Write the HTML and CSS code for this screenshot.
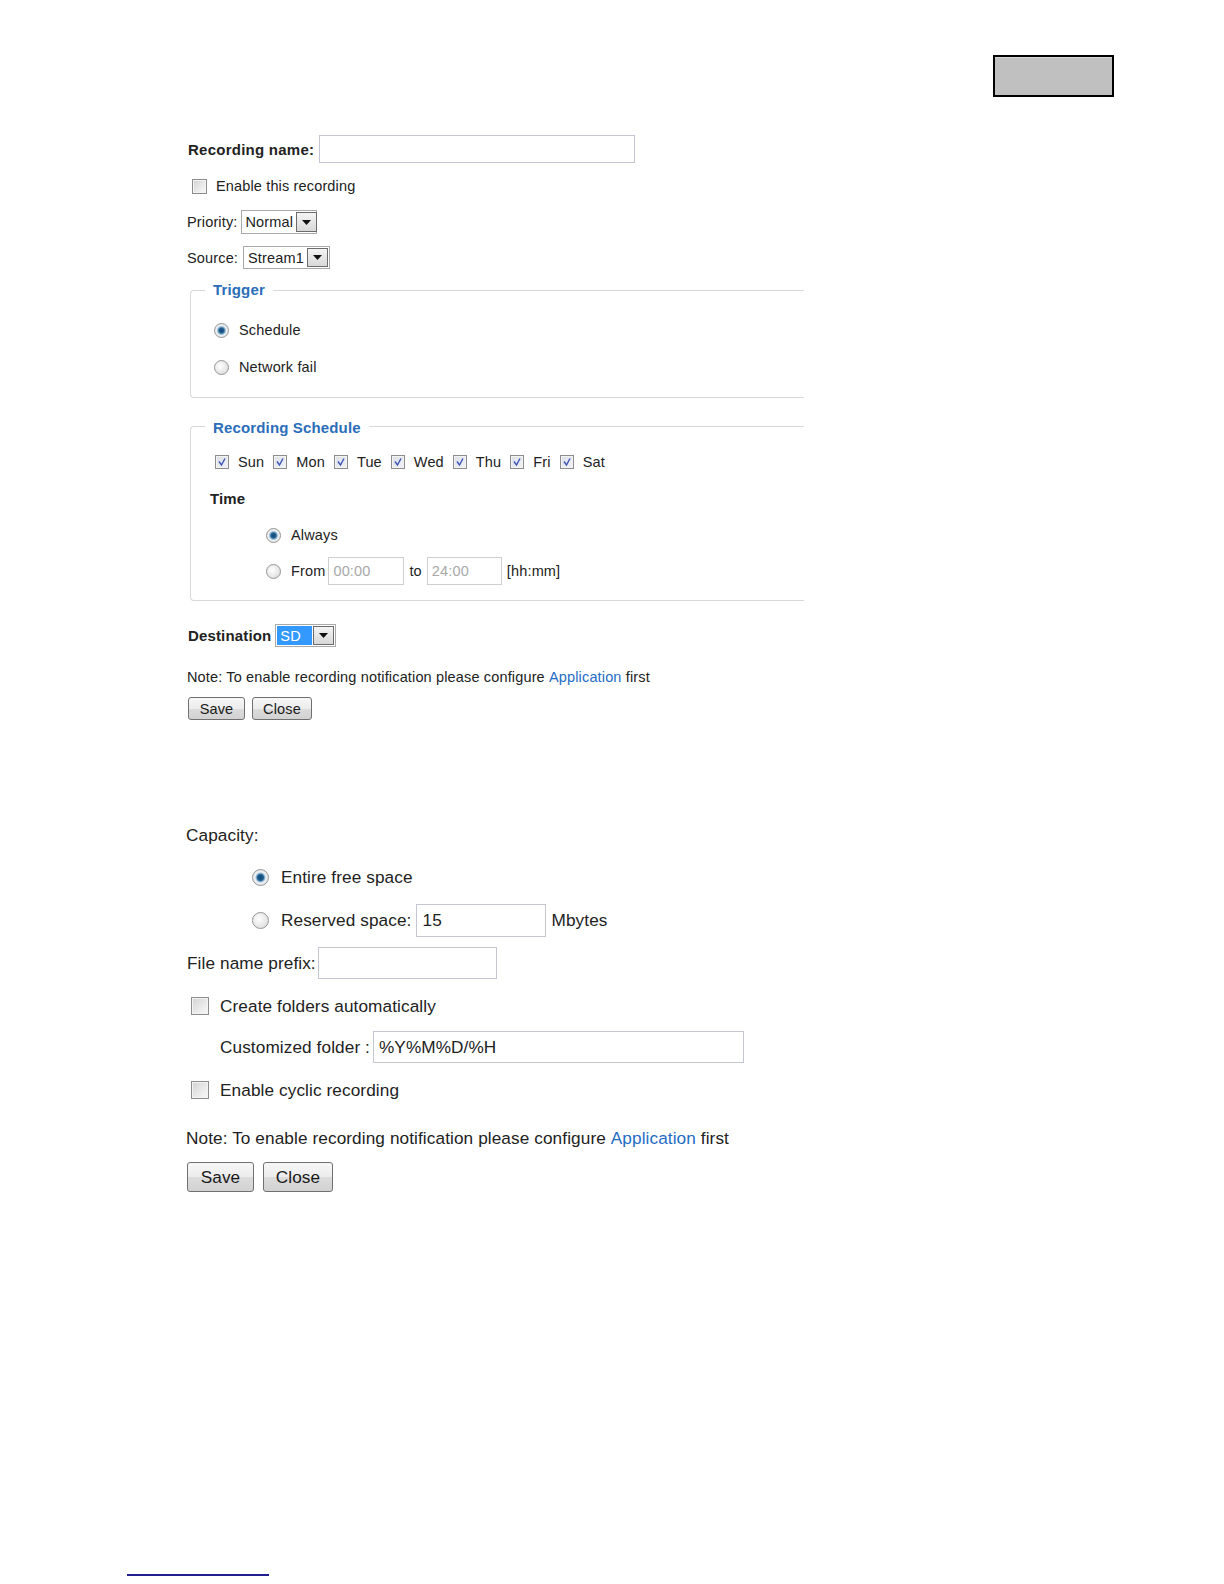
FILE: index.html
```html
<!DOCTYPE html>
<html lang="en">
<head>
<meta charset="utf-8">
<title>Recording settings</title>
<link rel="stylesheet" href="styles.css">
</head>
<body>
<div class="page">
  <div class="header"><div class="tab-box"></div></div>

  <section class="shot shot1">
    <div class="row r-name"><span class="lbl-b">Recording name:</span><span class="txt w316"></span></div>
    <div class="row r-enable"><span class="cb"></span><span>Enable this recording</span></div>
    <div class="row r-pri"><span>Priority:</span>
      <span class="sel w76"><span class="val">Normal</span><span class="arr"><svg width="9" height="5" viewBox="0 0 9 5"><path d="M0 0H9L4.5 5Z" fill="#111"/></svg></span></span>
    </div>
    <div class="row r-src"><span>Source:</span>
      <span class="sel w87"><span class="val">Stream1</span><span class="arr"><svg width="9" height="5" viewBox="0 0 9 5"><path d="M0 0H9L4.5 5Z" fill="#111"/></svg></span></span>
    </div>

    <fieldset class="fs fs-trigger">
      <legend>Trigger</legend>
      <div class="row fr r-sched"><span class="rad on"></span><span>Schedule</span></div>
      <div class="row fr r-net"><span class="rad"></span><span>Network fail</span></div>
    </fieldset>

    <fieldset class="fs fs-sched">
      <legend>Recording Schedule</legend>
      <div class="row days">
        <span class="day"><span class="cb ck"><svg width="12" height="12" viewBox="0 0 12 12"><path d="M3 5.5L5.5 9L9 2.5" fill="none" stroke="#3d54b5" stroke-width="1.4"/></svg></span>Sun</span>
        <span class="day"><span class="cb ck"><svg width="12" height="12" viewBox="0 0 12 12"><path d="M3 5.5L5.5 9L9 2.5" fill="none" stroke="#3d54b5" stroke-width="1.4"/></svg></span>Mon</span>
        <span class="day"><span class="cb ck"><svg width="12" height="12" viewBox="0 0 12 12"><path d="M3 5.5L5.5 9L9 2.5" fill="none" stroke="#3d54b5" stroke-width="1.4"/></svg></span>Tue</span>
        <span class="day"><span class="cb ck"><svg width="12" height="12" viewBox="0 0 12 12"><path d="M3 5.5L5.5 9L9 2.5" fill="none" stroke="#3d54b5" stroke-width="1.4"/></svg></span>Wed</span>
        <span class="day"><span class="cb ck"><svg width="12" height="12" viewBox="0 0 12 12"><path d="M3 5.5L5.5 9L9 2.5" fill="none" stroke="#3d54b5" stroke-width="1.4"/></svg></span>Thu</span>
        <span class="day"><span class="cb ck"><svg width="12" height="12" viewBox="0 0 12 12"><path d="M3 5.5L5.5 9L9 2.5" fill="none" stroke="#3d54b5" stroke-width="1.4"/></svg></span>Fri</span>
        <span class="day"><span class="cb ck"><svg width="12" height="12" viewBox="0 0 12 12"><path d="M3 5.5L5.5 9L9 2.5" fill="none" stroke="#3d54b5" stroke-width="1.4"/></svg></span>Sat</span>
      </div>
      <div class="row r-time lbl-b">Time</div>
      <div class="row r-always"><span class="rad on"></span><span>Always</span></div>
      <div class="row r-from"><span class="rad"></span><span class="from-l">From</span><span class="txt dis w76">00:00</span><span class="to-l">to</span><span class="txt dis w75">24:00</span><span class="hh">[hh:mm]</span></div>
    </fieldset>

    <div class="row r-dest"><span class="lbl-b">Destination</span>
      <span class="sel w61"><span class="val hl">SD</span><span class="arr"><svg width="9" height="5" viewBox="0 0 9 5"><path d="M0 0H9L4.5 5Z" fill="#111"/></svg></span></span>
    </div>
    <div class="row r-note">Note: To enable recording notification please configure&nbsp;<span class="link">Application</span>&nbsp;first</div>
    <div class="row r-btns"><span class="btn b-save">Save</span><span class="btn b-close">Close</span></div>
  </section>

  <section class="shot shot2">
    <div class="row r-cap">Capacity:</div>
    <div class="row r-entire"><span class="rad big on"></span><span>Entire free space</span></div>
    <div class="row r-res"><span class="rad big"></span><span>Reserved space:</span><span class="txt w130">15</span><span>Mbytes</span></div>
    <div class="row r-prefix"><span>File name prefix:</span><span class="txt w179"></span></div>
    <div class="row r-create"><span class="cb big"></span><span>Create folders automatically</span></div>
    <div class="row r-custom"><span>Customized folder :</span><span class="txt w371">%Y%M%D/%H</span></div>
    <div class="row r-cyclic"><span class="cb big"></span><span>Enable cyclic recording</span></div>
    <div class="row r-note2">Note: To enable recording notification please configure&nbsp;<span class="link">Application</span>&nbsp;first</div>
    <div class="row r-btns2"><span class="btn b-save2">Save</span><span class="btn b-close2">Close</span></div>
  </section>

  <div class="foot-line"></div>
</div>
</body>
</html>
```

FILE: styles.css
```css
html, body {
  margin: 0;
  padding: 0;
  background: #fff;
}
body {
  font-family: "Liberation Sans", Arial, sans-serif;
  color: #222;
}
.page {
  width: 1224px;
  height: 1584px;
  overflow: hidden;
}

/* header box */
.header {
  display: flex;
  justify-content: flex-end;
  padding: 55px 110px 0 0;
}
.tab-box {
  width: 117px;
  height: 38px;
  border: 2px solid #000;
  background: #c0c0c0;
  box-shadow: inset 0 1px 0 #d6d6d6;
}

/* generic */
.row {
  display: flex;
  align-items: center;
  white-space: nowrap;
}
.lbl-b {
  font-weight: bold;
  font-size: 15px;
}
.txt {
  box-sizing: border-box;
  border: 1px solid #c4c6d4;
  background: #fff;
  display: flex;
  align-items: center;
  padding: 0 5px;
}
.txt.dis {
  color: #a8a8a8;
  border-color: #cfcfcf;
  padding: 0 4px;
}
.cb {
  box-sizing: border-box;
  width: 15px;
  height: 15px;
  flex: none;
  border: 1px solid #8d8d8d;
  background: linear-gradient(135deg, #d2d2d2 0%, #ebebeb 60%, #f8f8f8 100%);
  box-shadow: inset 0 0 0 1px #f3f3f3;
  display: flex;
  align-items: center;
  justify-content: center;
}
.cb.ck {
  width: 14px;
  height: 14px;
  background: linear-gradient(135deg, #dcdfe8 0%, #f2f3f8 100%);
}
.cb.big {
  width: 18px;
  height: 18px;
}
.rad {
  box-sizing: border-box;
  width: 15px;
  height: 15px;
  flex: none;
  border-radius: 50%;
  border: 1px solid #969696;
  background: radial-gradient(circle at 40% 40%, #ffffff 0%, #e2e2e2 70%, #cdcdcd 100%);
}
.rad.on {
  background: radial-gradient(circle at 50% 50%, #134a78 0, #1f5f92 2.5px, #7fa6c6 3.5px, #eef2f5 5px, #d3d3d3 100%);
}
.rad.big {
  width: 17px;
  height: 17px;
}
.rad.big.on {
  background: radial-gradient(circle at 50% 50%, #0f4674 0, #1d5d90 3px, #7fa6c6 4px, #eef2f5 5.5px, #d0d0d0 100%);
}
.sel {
  box-sizing: border-box;
  display: flex;
  border: 1px solid #a9a9a9;
  background: #fff;
  padding: 1px;
}
.sel .val {
  flex: 1;
  display: flex;
  align-items: center;
  padding: 0 3px;
}
.sel .val.hl {
  background: #3399ff;
  color: #fff;
  margin-right: 1px;
}
.sel .arr {
  box-sizing: border-box;
  width: 21px;
  flex: none;
  border: 1px solid #6c6c6c;
  background: linear-gradient(#f4f4f4, #d8d8d8);
  display: flex;
  align-items: center;
  justify-content: center;
}
.link {
  color: #1f6cc4;
}
.btn {
  box-sizing: border-box;
  display: flex;
  align-items: center;
  justify-content: center;
  border: 1px solid #707070;
  border-radius: 3px;
  background: linear-gradient(#f7f7f7 0%, #ececec 50%, #dcdcdc 51%, #d2d2d2 100%);
  color: #1a1a1a;
}

/* ---- screenshot 1 ---- */
.shot1 {
  margin-top: 38px;
  padding-left: 187px;
  font-size: 14.5px;
  letter-spacing: 0.15px;
}
.r-name { height: 28px; gap: 5px; padding-left: 1px; }
.r-name .lbl-b { letter-spacing: 0.25px; }
.r-name .txt { height: 28px; }
.w316 { width: 316px; }
.r-enable { height: 20px; margin-top: 13px; gap: 9px; padding-left: 5px; }
.r-pri { height: 24px; margin-top: 14px; gap: 3px; }
.r-pri .sel { height: 24px; }
.w76 { width: 76px; }
.r-src { height: 23px; margin-top: 12px; gap: 5px; }
.r-src .sel { height: 23px; }
.w87 { width: 87px; }

.fs {
  box-sizing: border-box;
  width: 614px;
  min-width: 0;
  margin: 0 0 0 3px;
  border: 1px solid #d8d8d8;
  border-right: none;
  border-radius: 4px 0 0 4px;
  padding: 0 0 0 14px;
}
.fs legend {
  padding: 0 8px;
  font-weight: bold;
  font-size: 15px;
  line-height: 18px;
  color: #2b6db9;
}
.fs-trigger { margin-top: 12px; padding-bottom: 20px; }
.r-sched { height: 20px; margin-top: 21px; padding-left: 9px; gap: 10px; }
.r-net { height: 20px; margin-top: 17px; padding-left: 9px; gap: 10px; }

.fs-sched { margin-top: 19px; padding-bottom: 15px; }
.fs-sched legend { position: relative; top: 2px; }
.days { height: 20px; margin-top: 17px; padding-left: 10px; gap: 9px; }
.day { display: flex; align-items: center; gap: 9px; }
.r-time { height: 20px; margin-top: 16px; padding-left: 5px; }
.r-always { height: 20px; margin-top: 17px; padding-left: 61px; gap: 10px; }
.r-from { height: 28px; margin-top: 12px; padding-left: 61px; }
.r-from .rad { margin-right: 10px; }
.r-from .txt { height: 28px; }
.from-l { margin-right: 3px; }
.to-l { margin: 0 5px; }
.hh { margin-left: 5px; }
.w75 { width: 75px; }

.r-dest { height: 23px; margin-top: 23px; gap: 4px; padding-left: 1px; }
.r-dest .sel { height: 23px; }
.w61 { width: 61px; }
.r-note { height: 18px; margin-top: 21px; }
.r-btns { height: 23px; margin-top: 11px; gap: 7px; padding-left: 1px; }
.b-save { width: 57px; height: 23px; }
.b-close { width: 60px; height: 23px; }

/* ---- screenshot 2 ---- */
.shot2 {
  margin-top: 105px;
  padding-left: 186px;
  font-size: 17.2px;
  letter-spacing: 0.1px;
}
.r-cap { height: 20px; }
.r-entire { height: 22px; margin-top: 21px; padding-left: 66px; gap: 12px; }
.r-res { height: 33px; margin-top: 16px; padding-left: 66px; gap: 12px; }
.r-res .txt { height: 33px; margin-left: -7px; margin-right: -7px; }
.w130 { width: 130px; }
.r-prefix { height: 32px; margin-top: 10px; gap: 2px; padding-left: 1px; }
.r-prefix .txt { height: 32px; }
.w179 { width: 179px; }
.r-create { height: 22px; margin-top: 16px; padding-left: 5px; gap: 11px; }
.r-custom { height: 32px; margin-top: 14px; padding-left: 34px; gap: 3px; }
.r-custom .txt { height: 32px; }
.w371 { width: 371px; }
.r-cyclic { height: 22px; margin-top: 16px; padding-left: 5px; gap: 11px; }
.r-note2 { height: 22px; margin-top: 26px; }
.r-btns2 { height: 30px; margin-top: 13px; gap: 9px; padding-left: 1px; }
.b-save2 { width: 67px; height: 30px; }
.b-close2 { width: 70px; height: 30px; }

.foot-line {
  margin: 382px 0 0 127px;
  width: 142px;
  height: 2px;
  background: #1f1f8f;
}
```
